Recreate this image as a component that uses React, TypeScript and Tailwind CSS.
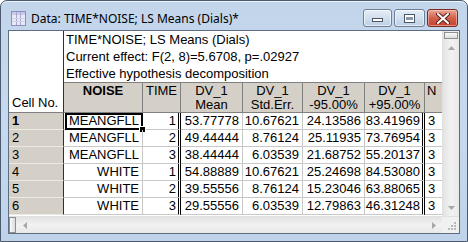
import React from "react";

const rows = [
  ["1", "MEANGFLL", "1", "53.77778", "10.67621", "24.13586", "83.41969", "3"],
  ["2", "MEANGFLL", "2", "49.44444", "8.76124", "25.11935", "73.76954", "3"],
  ["3", "MEANGFLL", "3", "38.44444", "6.03539", "21.68752", "55.20137", "3"],
  ["4", "WHITE", "1", "54.88889", "10.67621", "25.24698", "84.53080", "3"],
  ["5", "WHITE", "2", "39.55556", "8.76124", "15.23046", "63.88065", "3"],
  ["6", "WHITE", "3", "29.55556", "6.03539", "12.79863", "46.31248", "3"],
];

function TitleIcon() {
  return (
    <svg width="15" height="15" viewBox="0 0 15 15">
      <rect x="0.5" y="0.5" width="14" height="14" fill="#e9e9f6" stroke="#8c8fc0" />
      <rect x="1" y="1" width="13" height="3" fill="#c9cbe6" />
      <line x1="5.5" y1="1" x2="5.5" y2="14" stroke="#a6a8d2" />
      <line x1="9.5" y1="1" x2="9.5" y2="14" stroke="#a6a8d2" />
      <line x1="1" y1="7.5" x2="14" y2="7.5" stroke="#d0d1ea" />
      <line x1="1" y1="10.5" x2="14" y2="10.5" stroke="#d0d1ea" />
    </svg>
  );
}

function CaptionButtons() {
  return (
    <div className="flex items-start gap-[2px] mt-[8px] mr-[1px]">
      <div className="w-[29px] h-[18px] rounded-[3px] border border-[#6e7f96] bg-gradient-to-b from-[#e6eef8] via-[#d2dfee] to-[#bccfe6] flex items-center justify-center shadow-[inset_0_0_0_1px_rgba(255,255,255,0.6)]">
        <div className="w-[11px] h-[4px] mt-[4px] bg-white border border-[#4a5566]" />
      </div>
      <div className="w-[31px] h-[18px] rounded-[3px] border border-[#6e7f96] bg-gradient-to-b from-[#e6eef8] via-[#d2dfee] to-[#bccfe6] flex items-center justify-center shadow-[inset_0_0_0_1px_rgba(255,255,255,0.6)]">
        <div className="w-[11px] h-[9px] border border-[#4a5566] bg-white flex items-center justify-center">
          <div className="w-[7px] h-[3px] mt-[1px] bg-[#8b96a8]" />
        </div>
      </div>
      <div className="w-[31px] h-[18px] rounded-[3px] border border-[#7a2a20] bg-gradient-to-b from-[#e8a595] via-[#d2614c] to-[#c24130] flex items-center justify-center shadow-[inset_0_0_0_1px_rgba(255,220,210,0.5)]">
        <svg width="14" height="11" viewBox="0 0 14 11">
          <path d="M2 1 L12 10 M12 1 L2 10" stroke="#5a2018" strokeWidth="4" strokeLinecap="round" />
          <path d="M2 1 L12 10 M12 1 L2 10" stroke="#ffffff" strokeWidth="2" strokeLinecap="round" />
        </svg>
      </div>
    </div>
  );
}

export default function App() {
  const font = "font-['Liberation_Sans',Arial,sans-serif]";
  return (
    <div className="w-[468px] h-[242px] bg-white">
      <div className="w-[468px] h-[242px] rounded-t-[7px] border border-[#4b5a6e] bg-gradient-to-b from-[#c2d5eb] via-[#c7d9ee] to-[#bed3ea] flex flex-col shadow-[inset_0_1px_0_#eef4fb]">
        {/* Title bar */}
        <div className="h-[29px] flex items-start justify-between pl-[10px] pr-[8px]">
          <div className="flex items-center mt-[10px] gap-[5px]">
            <TitleIcon />
            <span className="font-['Noto_Sans',sans-serif] text-[12px] leading-[15px] text-black">
              Data: TIME*NOISE; LS Means (Dials)*
            </span>
          </div>
          <CaptionButtons />
        </div>

        {/* Client */}
        <div className={`mx-[7px] h-[204px] border border-[#5e6d80] bg-white flex flex-col ${font} text-[13px] text-black`}>
          <div className="flex h-[185px]">
            {/* grid */}
            <div className="w-[433px] flex flex-col">
              {/* top area */}
              <div className="flex h-[82px]">
                <div className="w-[55px] border-r border-[#303030] border-b border-b-[#808080] flex items-end pl-[3px] pb-[1px] leading-[17px]">
                  Cell No.
                </div>
                <div className="w-[378px] flex flex-col">
                  <div className="h-[51px] pl-[2px] leading-[17px]">
                    <div>TIME*NOISE; LS Means (Dials)</div>
                    <div>Current effect: F(2, 8)=5.6708, p=.02927</div>
                    <div>Effective hypothesis decomposition</div>
                  </div>
                  <div className="h-[31px] grid grid-cols-[79px_38px_62px_60px_62px_60px_17px] bg-[#d4d0c8] border-t border-b border-[#808080] leading-[14px]">
                    <div className="border-r border-[#808080] text-center font-bold pt-[1px]">NOISE</div>
                    <div className="border-r border-[#808080] text-center pt-[1px]">TIME</div>
                    <div className="border-r border-[#808080] text-center pt-[1px]">DV_1<br />Mean</div>
                    <div className="border-r border-[#808080] text-center pt-[1px]">DV_1<br />Std.Err.</div>
                    <div className="border-r border-[#808080] text-center pt-[1px]">DV_1<br />-95.00%</div>
                    <div className="border-r border-[#808080] text-center pt-[1px]">DV_1<br />+95.00%</div>
                    <div className="pl-[2px] pt-[1px]">N</div>
                  </div>
                </div>
              </div>
              {/* data rows */}
              {rows.map((r, i) => (
                <div key={i} className="grid grid-cols-[55px_79px_38px_62px_60px_62px_60px_17px] h-[17px] leading-[16px]">
                  <div className={`bg-[#d4d0c8] border-r border-[#303030] border-b border-b-[#ece9e2] pl-[3px] ${i === 0 ? "font-bold" : ""}`}>{r[0]}</div>
                  <div className="relative border-r border-b border-[#c8c8c8] text-right pr-[3px]">
                    {r[1]}
                    {i === 0 && (
                      <>
                        <div className="absolute left-[1px] top-0 right-[-1px] bottom-[-1px] border-2 border-black" />
                        <div className="absolute right-[-3px] bottom-[-3px] w-[5px] h-[5px] bg-black outline outline-1 outline-white" />
                      </>
                    )}
                  </div>
                  <div className="border-r-[3px] border-double border-r-black border-b border-b-[#c8c8c8] text-right pr-[2px]">{r[2]}</div>
                  <div className="border-r border-b border-[#c8c8c8] text-right pr-[3px]">{r[3]}</div>
                  <div className="border-r border-b border-[#c8c8c8] text-right pr-[3px]">{r[4]}</div>
                  <div className="border-r border-b border-[#c8c8c8] text-right pr-[3px]">{r[5]}</div>
                  <div className="border-r-[3px] border-double border-r-black border-b border-b-[#c8c8c8] text-right pr-[2px]">{r[6]}</div>
                  <div className="border-b border-[#c8c8c8] pl-[3px]">{r[7]}</div>
                </div>
              ))}
            </div>
            {/* vertical scrollbar */}
            <div className="w-[17px] flex flex-col bg-gradient-to-r from-[#e3e3e3] via-[#f2f2f2] to-[#e9e9e9] border-l border-[#e0e0e0]">
              <div className="h-[7px] mx-[1px] mt-[1px] border border-[#8e8f8f] bg-gradient-to-b from-[#fafafa] to-[#dcdcdc]" />
              <div className="h-[17px] flex items-center justify-center">
                <svg width="7" height="4" viewBox="0 0 7 4"><path d="M0 4 L3.5 0 L7 4 Z" fill="#a8a8a8" /></svg>
              </div>
              <div className="flex-1" />
              <div className="h-[17px] flex items-center justify-center">
                <svg width="7" height="4" viewBox="0 0 7 4"><path d="M0 0 L3.5 4 L7 0 Z" fill="#a8a8a8" /></svg>
              </div>
            </div>
          </div>
          {/* horizontal scrollbar */}
          <div className="flex h-[17px] bg-gradient-to-b from-[#e3e3e3] via-[#f2f2f2] to-[#e9e9e9] border-t border-[#e0e0e0]">
            <div className="w-[7px] h-[16px] border border-[#8e8f8f] bg-gradient-to-r from-[#fafafa] to-[#dcdcdc]" />
            <div className="w-[17px] flex items-center justify-center">
              <svg width="4" height="7" viewBox="0 0 4 7"><path d="M4 0 L0 3.5 L4 7 Z" fill="#a8a8a8" /></svg>
            </div>
            <div className="flex-1" />
            <div className="w-[17px] flex items-center justify-center">
              <svg width="4" height="7" viewBox="0 0 4 7"><path d="M0 0 L4 3.5 L0 7 Z" fill="#a8a8a8" /></svg>
            </div>
            <div className="w-[17px] bg-[#f0f0f0] flex items-end justify-end pr-[3px] pb-[3px]">
              <svg width="9" height="9" viewBox="0 0 9 9" fill="#b8b8b8">
                <rect x="7" y="1" width="2" height="2" />
                <rect x="4" y="4" width="2" height="2" />
                <rect x="7" y="4" width="2" height="2" />
                <rect x="1" y="7" width="2" height="2" />
                <rect x="4" y="7" width="2" height="2" />
                <rect x="7" y="7" width="2" height="2" />
              </svg>
            </div>
          </div>
        </div>
        <div className="flex-1" />
      </div>
    </div>
  );
}
